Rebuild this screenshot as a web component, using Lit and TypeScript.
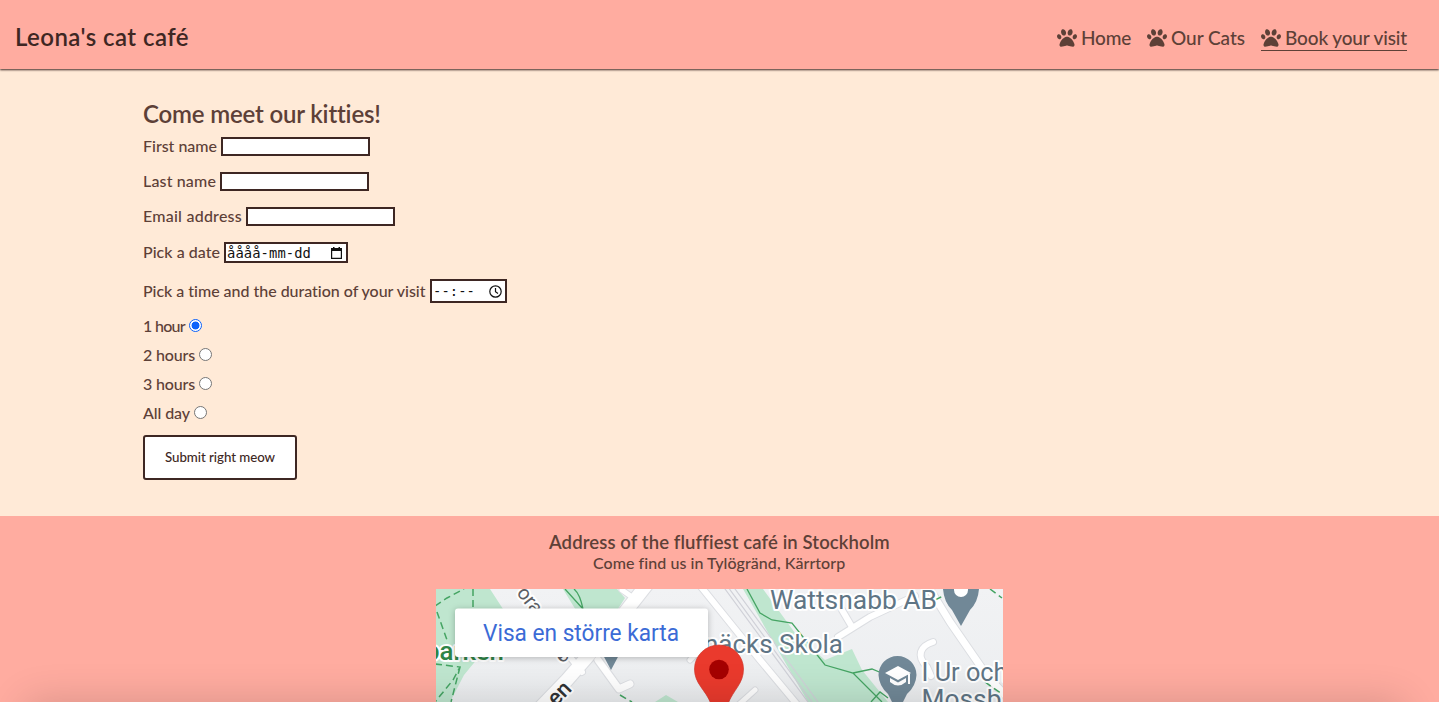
import { LitElement, html, css, svg } from "lit";
import { customElement, property } from "lit/decorators.js";

/** Tracks its text so that the run is exactly `w` pixels wide. */
@customElement("tracked-text")
class TrackedText extends LitElement {
  @property({ type: Number }) w = 0;
  @property() text = "";
  static styles = css`
    :host { display: inline-block; white-space: pre; flex: none; }
    .run { display: inline-block; }
  `;
  firstUpdated() {
    const run = this.renderRoot.querySelector(".run") as HTMLElement;
    const natural = run.getBoundingClientRect().width;
    run.style.letterSpacing = `${(this.w - natural) / this.text.length}px`;
    this.style.width = `${this.w}px`;
  }
  render() {
    return html`<span class="run">${this.text}</span>`;
  }
}

const paw = html`<svg class="paw" viewBox="0 0 512 512"><path fill="currentColor" d="M226.5 92.9c14.3 42.9-.3 86.2-32.6 96.8s-70.1-15.6-84.4-58.5s.3-86.2 32.6-96.8s70.1 15.6 84.4 58.5zM100.4 198.6c18.9 32.4 14.3 70.1-10.2 84.1s-59.7-.9-78.5-33.3S-2.7 179.3 21.8 165.3s59.7 .9 78.5 33.3zM69.2 401.2C121.6 259.9 214.7 224 256 224s134.4 35.9 186.8 177.2c3.6 9.7 5.2 20.1 5.2 30.5v1.6c0 25.8-20.9 46.7-46.7 46.7c-11.5 0-22.9-1.4-34-4.2l-88-22c-15.3-3.8-31.3-3.8-46.6 0l-88 22c-11.1 2.8-22.5 4.2-34 4.2C84.9 480 64 459.1 64 433.3v-1.6c0-10.4 1.6-20.8 5.2-30.5zM421.8 282.7c-24.5-14-29.1-51.7-10.2-84.1s54-47.3 78.5-33.3s29.1 51.7 10.2 84.1s-54 47.3-78.5 33.3zM310.1 189.7c-32.3-10.6-46.9-53.9-32.6-96.8s52.1-69.1 84.4-58.5s46.9 53.9 32.6 96.8s-52.1 69.1-84.4 58.5z"/></svg>`;

@customElement("cafe-map")
class CafeMap extends LitElement {
  static styles = css`
    :host { display: block; width: 567px; height: 113px; }
    svg { display: block; width: 567px; height: 113px; font-family: Roboto, sans-serif; font-weight: 400; }
    .road { fill: none; stroke-linecap: round; stroke-linejoin: round; }
    .edge { stroke: #dcdee2; }
    .fill { stroke: #fff; }
    .park { fill: #bfe6cf; }
    .trail { fill: none; stroke: #45a463; stroke-width: 1.3; }
    .dash { stroke-dasharray: 7 4; stroke-width: 1.5; }
    .poi { fill: #5f7585; font-size: 25px; }
    .halo { stroke: #fff; stroke-width: 4; paint-order: stroke; stroke-linejoin: round; }
    .green { fill: #2f8547; font-size: 25px; font-weight: 500; }
    .street { fill: #5c6065; font-size: 20px; }
    .dark { fill: #303234; font-weight: 500; font-size: 22px; }
    .pin { fill: #718897; }
    .link { fill: #3b6bd6; font-size: 23.5px; }
    .card { fill: #fff; filter: drop-shadow(0 1px 3px rgba(0, 0, 0, 0.25)); }
  `;
  render() {
    const roads: [string, number][] = [
      ["M648 583L615 625L567 680L540 708", 13],
      ["M570 657L582 672", 6],
      ["M598 660L619 689L630 684", 7],
      ["M698 583L760 660L800 708", 6],
      ["M708 642L690 660M735 708L755 690", 5],
      ["M838 637L870 617L915 596M842 610L852 627", 6],
      ["M926 583L950 622L988 677L1006 696", 7],
      ["M933 642C920 646 916 656 927 667L931 676", 6],
      ["M622 590L632 597", 5],
    ];
    return html`<svg viewBox="436 589 567 113">
      <defs><linearGradient id="g" x1="0" y1="0" x2="0" y2="1"><stop offset="0" stop-color="#f1f2f4"/><stop offset="1" stop-color="#eceef0"/></linearGradient></defs>
      <rect x="435" y="589" width="568" height="113" fill="url(#g)"/>
      <path class="park" d="M435 589H490L503 609V640L478 658L464 675L450 702H435zM563 589H617L625 598L616 612H577zM743 589H763L795 633L825 660L852 649L862 670L888 702H808L782 657zM655 702L666 695L678 702z"/>
      ${roads.map(([d, w]) => svg`<path class="road edge" d=${d} stroke-width=${w + 2}></path>`)}
      ${roads.map(([d, w]) => svg`<path class="road fill" d=${d} stroke-width=${w}></path>`)}
      <path class="road" stroke="#d0d1d8" stroke-width="1.2" d="M725 589L808 702M728 587L812 702M735 589L818 702"/>
      <path class="trail" d="M747 589L760 613L772 620L792 623L803 637L825 665L853 673L882 702M853 673L872 669L884 674M871 702L880 692L888 698M565 589L583 609M574 589Q580 594 583 609"/>
      <path class="trail dash" d="M435 606L447 598L464 589M473 589V609M437 612L447 640M435 664L460 667L453 680L435 702M460 667L451 702M990 589L1002 598M985 682L1002 694M620 695L632 702M935 600L945 595"/>
      <path class="pin" d="M943 589H979Q978 602 970 610L961 626L952 610Q944 602 943 589z"/>
      <circle cx="961" cy="590" r="7" fill="#fff"/>
      <path class="pin" d="M878.500 675A19 19 0 1 1 916.500 675Q916 686 907 694L901 706H894L888 694Q879 686 878.500 675z"/>
      <path fill="#fff" d="M885 673L898 666L911 673L898 680zM890 678L898 682.500L906 678V682Q898 689 890 682zM908 674H910V684H908z"/>
      <path class="pin" d="M603 655H619L611 670z"/>
      <text class="poi halo" x="770" y="609" textLength="167" lengthAdjust="spacingAndGlyphs">Wattsnabb AB</text>
      <text class="poi halo" x="704" y="652.500" textLength="139" lengthAdjust="spacingAndGlyphs">näcks Skola</text>
      <text class="poi halo" x="921.500" y="681" textLength="86" lengthAdjust="spacingAndGlyphs">I Ur och</text>
      <text class="poi halo" x="921.500" y="707.500" textLength="80" lengthAdjust="spacingAndGlyphs">Mossb</text>
      <text class="green halo" x="425" y="660" textLength="79" lengthAdjust="spacingAndGlyphs">parken</text>
      <text class="street halo" transform="translate(516 593) rotate(52)" x="0" y="0">ora</text>
      <text class="street halo" transform="translate(562 664) rotate(-42)" x="0" y="0">e</text>
      <text class="dark halo" transform="translate(556 707) rotate(-46)" x="0" y="0">en</text>
      <rect class="card" x="455" y="608.500" width="253" height="48.500" rx="3"/>
      <text class="link" x="483" y="640.500" textLength="196" lengthAdjust="spacingAndGlyphs">Visa en större karta</text>
      <path fill="#ea3a2d" stroke="#d3382c" stroke-width=".7" d="M694.500 669A24.500 24 0 0 1 743.500 669C743.500 684 733 690 728 704H711C706 690 694.500 684 694.500 669z"/>
      <circle cx="719" cy="669.500" r="9.800" fill="#a50000"/>
    </svg>`;
  }
}

@customElement("app-root")
class AppRoot extends LitElement {
  static styles = css`
    :host {
      display: flex; flex-direction: column; position: relative; width: 100%; height: 702px; overflow: hidden;
      background: #ffead7; color: #5d4037; font: 500 16px/20px Lato, sans-serif; box-sizing: border-box;
    }
    * { box-sizing: border-box; }
    header {
      height: 69px; flex: none; background: #ffaca0; box-shadow: 0 1px 2px #3e2723; z-index: 1;
      display: flex; justify-content: space-between; padding: 0 32px 0 15px;
    }
    .brand { color: #3e2723; font-size: 24px; line-height: 28px; font-weight: 600; padding-top: 23px; }
    nav { display: flex; gap: 16px; padding-top: 27px; }
    .item { display: flex; gap: 4px; height: 24px; font-size: 19px; line-height: 22px; border-bottom: 1px solid transparent; }
    .current { border-bottom-color: #5d4037; }
    .paw { width: 20px; height: 20px; margin-top: 1px; flex: none; }
    main { height: 447px; flex: none; padding: 30px 0 0 143px; display: flex; flex-direction: column; align-items: flex-start; }
    h2 { margin: 0; font-size: 24px; line-height: 30px; font-weight: 600; height: 38px; }
    .row { display: flex; gap: 4px; align-items: flex-start; height: 35px; }
    .row.date { height: 37px; }
    .row.time { height: 38px; }
    .row.opt { height: 29px; }
    .row tracked-text { line-height: 17px; }
    .row.date > tracked-text { margin-top: 1px; }
    .row.time > tracked-text { margin-top: 3px; }
    .row.opt tracked-text { line-height: 18px; }
    input { width: 149px; height: 19px; border: 2px solid #3e2723; background: #fff; margin: 0; padding: 0; border-radius: 0; }
    .picker {
      display: flex; align-items: center; justify-content: space-between; border: 2px solid #3e2723; background: #fff; color: #111;
      font: 13.800px/16px "DejaVu Sans Mono", monospace; padding: 0 4px 0 1px;
    }
    .day { width: 124px; height: 21px; }
    .row .day tracked-text { line-height: 18px; }
    .clock { width: 77px; height: 24px; padding-right: 3px; }
    .picker svg { display: block; flex: none; }
    .radio { width: 13px; height: 13px; margin-top: 2px; border: 1px solid #767676; border-radius: 50%; background: #fff; }
    .checked { border-color: #0b62fb; background: radial-gradient(circle, #0b62fb 3.600px, #fff 4.300px); }
    button {
      width: 154px; height: 45px; border: 2px solid #3e2723; border-radius: 3px; background: #fff; color: #3e2723;
      font: 500 13.300px/17px Lato, sans-serif; padding: 0; margin: 2px 0 0;
    }
    footer { flex: 1; background: #ffaca0; display: flex; flex-direction: column; align-items: center; padding: 15px 1px 0 0; }
    h3 { margin: 0; font-size: 18.500px; line-height: 22px; font-weight: 600; }
    .place { height: 36px; line-height: 20px; }
    .shade { position: absolute; left: 32px; right: 42px; top: 708px; height: 40px; box-shadow: 0 0 40px 6px rgba(0, 0, 0, 0.16); }
  `;
  private t(text: string, w: number) {
    return html`<tracked-text .text=${text} .w=${w}></tracked-text>`;
  }
  private field(label: string, w: number) {
    return html`<label class="row">${this.t(label, w)}<input type="text" /></label>`;
  }
  private option(label: string, w: number, on = false) {
    return html`<label class="row opt">${this.t(label, w)}<span class="radio ${on ? "checked" : ""}"></span></label>`;
  }
  render() {
    return html`
      <header>
        <div class="brand">${this.t("Leona's cat café", 174)}</div>
        <nav>
          <a class="item">${paw}${this.t("Home", 50)}</a>
          <a class="item">${paw}${this.t("Our Cats", 74)}</a>
          <a class="item current">${paw}${this.t("Book your visit", 122)}</a>
        </nav>
      </header>
      <main>
        <h2>${this.t("Come meet our kitties!", 237)}</h2>
        ${this.field("First name", 74)}
        ${this.field("Last name", 73)}
        ${this.field("Email address", 99)}
        <div class="row date">${this.t("Pick a date", 77)}
          <span class="picker day">${this.t("åååå-mm-dd", 84)}
            <svg width="11" height="12" viewBox="0 0 11 12"><path d="M.6 1.500H10.400V11.400H.6z" fill="none" stroke="#111" stroke-width="1.200"/><path d="M0 1H11V4H0zM2 0H3.500V2H2zM7.500 0H9V2H7.500z" fill="#111"/></svg>
          </span>
        </div>
        <div class="row time">${this.t("Pick a time and the duration of your visit", 283)}
          <span class="picker clock">${this.t("--:--", 42)}
            <svg width="13" height="13" viewBox="0 0 13 13" fill="none" stroke="#111" stroke-width="1.200"><circle cx="6.500" cy="6.500" r="5.700"/><path d="M6.500 3V6.800L9 8.500"/></svg>
          </span>
        </div>
        ${this.option("1 hour", 42, true)}
        ${this.option("2 hours", 52)}
        ${this.option("3 hours", 52)}
        ${this.option("All day", 47)}
        <button>${this.t("Submit right meow", 110)}</button>
      </main>
      <footer>
        <h3>${this.t("Address of the fluffiest café in Stockholm", 340)}</h3>
        <div class="place">${this.t("Come find us in Tylögränd, Kärrtorp", 252)}</div>
        <cafe-map></cafe-map>
      </footer>
      <div class="shade"></div>
    `;
  }
}
